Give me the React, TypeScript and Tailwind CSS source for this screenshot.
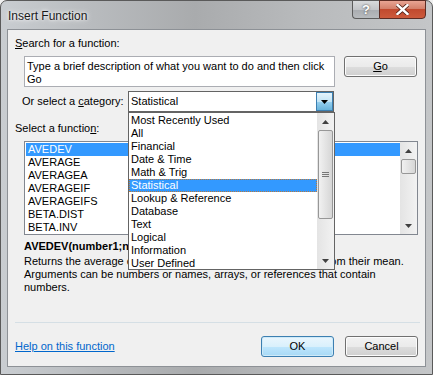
const categories = [
  "Most Recently Used",
  "All",
  "Financial",
  "Date & Time",
  "Math & Trig",
  "Statistical",
  "Lookup & Reference",
  "Database",
  "Text",
  "Logical",
  "Information",
  "User Defined",
];

const functions = [
  "AVEDEV",
  "AVERAGE",
  "AVERAGEA",
  "AVERAGEIF",
  "AVERAGEIFS",
  "BETA.DIST",
  "BETA.INV",
];

const UpArrow = () => (
  <svg width="7" height="4" viewBox="0 0 7 4">
    <path d="M0 4 L3.5 0 L7 4 Z" fill="#404040" />
  </svg>
);

const DownArrow = ({ color = "#404040" }: { color?: string }) => (
  <svg width="7" height="4" viewBox="0 0 7 4">
    <path d="M0 0 L7 0 L3.5 4 Z" fill={color} />
  </svg>
);

const Button = ({
  children,
  primary,
}: {
  children: React.ReactNode;
  primary?: boolean;
}) => (
  <div
    className={`w-[73px] h-[21px] flex items-center justify-center rounded-[3px] border text-[#000] ${
      primary
        ? "border-[#3c7fb1] bg-[linear-gradient(#eaf6fd_0%,#d9f0fc_50%,#bee6fd_51%,#a7d9f5_100%)] shadow-[inset_0_0_0_1px_#cfeaf8]"
        : "border-[#707070] bg-[linear-gradient(#f2f2f2_0%,#ebebeb_50%,#dddddd_51%,#cfcfcf_100%)] shadow-[inset_0_0_0_1px_#fcfcfc]"
    }`}
  >
    {children}
  </div>
);

const App = () => {
  return (
    <div className="w-[433px] h-[375px] font-['Liberation_Sans',Arial,sans-serif] text-[11px] leading-[13px] text-black overflow-hidden bg-[#f0f0f0]">
      <div className="relative w-[433px] h-[375px] rounded-t-[7px] border border-[#5a5a5a] bg-[linear-gradient(90deg,#c9cdd1_0%,#b9bcbf_20%,#a9abad_45%,#b8babc_70%,#c4c6c8_100%)] flex flex-col">
        {/* title bar */}
        <div className="h-[28px] flex items-start justify-between">
          <span className="ml-[7px] mt-[8px] text-[12px] leading-[14px] text-[#1a1a1a] [text-shadow:0_0_6px_#ffffff,0_0_3px_#ffffff]">
            Insert Function
          </span>
          <div className="flex mr-[6px] -mt-px">
            <div className="w-[27px] h-[19px] rounded-bl-[4px] border border-[#5c5c5c] border-r-0 bg-[linear-gradient(#d8dadc_0%,#c3c5c8_50%,#a9acb0_51%,#b8bbbe_100%)] flex items-center justify-center text-white font-bold text-[13px] [text-shadow:0_0_2px_#333]">
              ?
            </div>
            <div className="w-[47px] h-[19px] rounded-br-[4px] border border-[#5c2c24] bg-[linear-gradient(#e8a493_0%,#d3806b_45%,#c14a2f_50%,#cc5a3c_100%)] flex items-center justify-center">
              <svg width="13" height="11" viewBox="0 0 13 11">
                <path
                  d="M1.5 1 L11.5 10 M11.5 1 L1.5 10"
                  stroke="#4a1a10"
                  strokeWidth="4"
                  strokeLinecap="square"
                />
                <path
                  d="M1.5 1 L11.5 10 M11.5 1 L1.5 10"
                  stroke="#ffffff"
                  strokeWidth="2.4"
                  strokeLinecap="square"
                />
              </svg>
            </div>
          </div>
        </div>

        {/* client area */}
        <div className="relative mx-[6px] h-[338px] bg-[#f0f0f0] border border-[#8d9196] flex flex-col px-[6px]">
          <div className="mt-[7px] ml-px">
            <u>S</u>earch for a function:
          </div>

          <div className="flex mt-[6px] ml-[10px] gap-[9px]">
            <div className="w-[311px] h-[31px] bg-white border border-[#abadb3] px-[2px] pt-[3px] text-[11px] leading-[13px]">
              Type a brief description of what you want to do and then click Go
            </div>
            <Button>
              <u>G</u>o
            </Button>
          </div>

          <div className="flex items-center mt-[4px]">
            <span className="ml-[8px] w-[106px]">
              Or select a <u>c</u>ategory:
            </span>
            <div className="w-[206px] h-[21px] bg-white border border-[#646464] flex items-center">
              <span className="flex-1 pl-[2px]">Statistical</span>
              <div className="w-[17px] h-[19px] border border-[#3c7fb1] bg-[linear-gradient(#e5f4fc_0%,#c4e5f6_50%,#98d1ef_51%,#68b3db_100%)] flex items-center justify-center">
                <DownArrow color="#000" />
              </div>
            </div>
          </div>

          <div className="mt-[10px] ml-px">
            Select a functio<u>n</u>:
          </div>

          <div className="mt-[6px] ml-[10px] w-[394px] h-[94px] bg-white border border-[#828790] flex">
            <div className="flex-1 pt-px pl-px">
              {functions.map((f, i) => (
                <div
                  key={f}
                  className={`h-[13px] pl-[2px] ${
                    i === 0 ? "bg-[#3399ff] text-white" : ""
                  }`}
                >
                  {f}
                </div>
              ))}
            </div>
            <div className="w-[17px] bg-[linear-gradient(90deg,#e4e4e4,#f2f2f2)] flex flex-col items-center">
              <div className="h-[17px] flex items-center justify-center">
                <UpArrow />
              </div>
              <div className="w-[15px] h-[15px] rounded-[2px] border border-[#979797] bg-[linear-gradient(90deg,#f1f1f1,#d6d6d6)]" />
              <div className="flex-1" />
              <div className="h-[17px] flex items-center justify-center">
                <DownArrow />
              </div>
            </div>
          </div>

          <div className="mt-[5px] ml-[10px] font-bold">
            AVEDEV(number1;number2;...)
          </div>
          <div className="ml-[10px] mt-[2px] w-[395px]">
            Returns the average of the absolute deviations of data points from
            their mean. Arguments can be numbers or names, arrays, or references
            that contain numbers.
          </div>

          <div className="mt-[28px] ml-px w-[405px] h-px bg-[#d5dfe5]" />

          <div className="flex items-center mt-[13px]">
            <span className="ml-px text-[#0066cc] underline w-[246px]">
              Help on this function
            </span>
            <div className="flex gap-[11px]">
              <Button primary>OK</Button>
              <Button>Cancel</Button>
            </div>
          </div>

          {/* open category dropdown */}
          <div className="absolute left-[120px] top-[82px] w-[207px] h-[158px] bg-white border border-[#646464] flex">
            <div className="flex-1 pt-px">
              {categories.map((c) => (
                <div
                  key={c}
                  className={`h-[13px] pl-[2px] whitespace-nowrap ${
                    c === "Statistical"
                      ? "bg-[#3399ff] text-white outline-1 outline-dotted outline-[#b8793c] -outline-offset-1"
                      : ""
                  }`}
                >
                  {c}
                </div>
              ))}
            </div>
            <div className="w-[17px] bg-[linear-gradient(90deg,#e4e4e4,#f2f2f2)] flex flex-col items-center">
              <div className="h-[17px] flex items-center justify-center">
                <UpArrow />
              </div>
              <div className="w-[15px] h-[89px] rounded-[2px] border border-[#979797] bg-[linear-gradient(90deg,#f1f1f1,#d6d6d6)] flex flex-col items-center justify-center gap-px">
                <div className="w-[7px] h-px bg-[#777]" />
                <div className="w-[7px] h-px bg-[#777]" />
                <div className="w-[7px] h-px bg-[#777]" />
              </div>
              <div className="flex-1" />
              <div className="h-[17px] flex items-center justify-center">
                <DownArrow />
              </div>
            </div>
          </div>
        </div>
      </div>
    </div>
  );
};

export default App;
